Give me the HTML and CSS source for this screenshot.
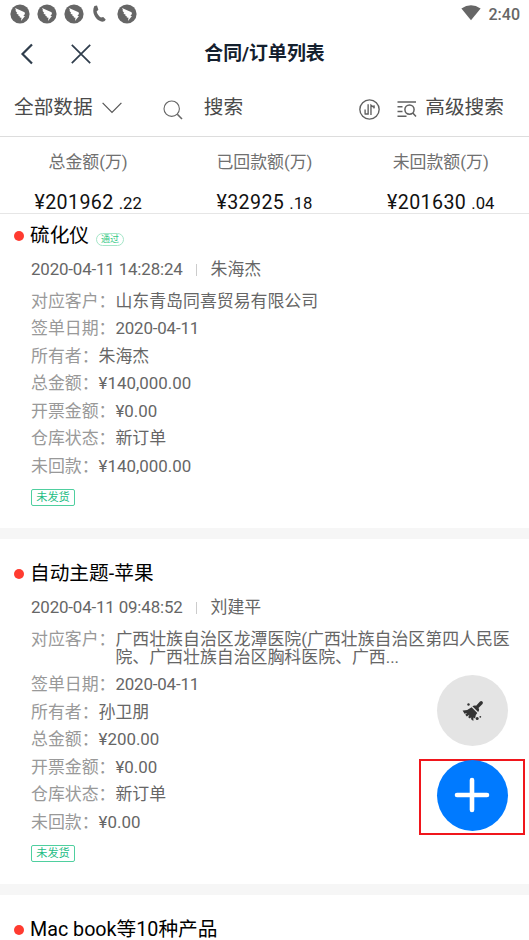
FILE: index.html
```html
<!DOCTYPE html>
<html lang="zh-CN">
<head>
<meta charset="utf-8">
<title>合同/订单列表</title>
<link rel="stylesheet" href="styles.css">
</head>
<body>
<svg width="0" height="0" class="defs">
  <symbol id="bird" viewBox="0 0 20 20"><circle cx="10" cy="10" r="9.6" fill="#666"/><path d="M5 4 14 8c1 .5 1.200 1.100.7 2.200L13.400 12h1.600l-4 5 .5-3.200-1.800-.3.300-1-2-.8 1-.8L6.300 9.500l1-.4-2.100-2.500 1-.2Z" fill="#fff"/></symbol>
</svg>
<div class="screen">
  <header class="status">
    <div class="notices">
      <svg class="bird"><use href="#bird"/></svg>
      <svg class="bird"><use href="#bird"/></svg>
      <svg class="bird"><use href="#bird"/></svg>
      <svg class="phone" viewBox="0 0 13 17"><path d="M1.400 1 4 .5 5.400 4.700 3.600 6.500C4.400 9.200 5.800 11.200 8 12.600L10.200 11.900 12.700 14.500C11.500 17.200 8.400 17.200 6 15.600 1.300 12.500-1.400 6 1.400 1Z" fill="#666"/></svg>
      <svg class="bird"><use href="#bird"/></svg>
    </div>
    <div class="system">
      <svg width="20" height="16" viewBox="0 0 20 16"><path d="M.4 3.400Q10-2.800 19.600 3.400L10 15.300Z" fill="#666"/></svg>
      <span>2:40</span>
    </div>
  </header>
  <nav class="nav">
    <div class="nav-side">
      <svg width="14" height="22" viewBox="0 0 14 22"><path d="M12 1.500 2.500 11 12 20.500" fill="none" stroke="#2f3d4c" stroke-width="2.200"/></svg>
      <svg width="20" height="20" viewBox="0 0 20 20"><path d="m.8.8 18.400 18.400M19.200.8.8 19.200" fill="none" stroke="#2f3d4c" stroke-width="1.700"/></svg>
    </div>
    <h1>合同/订单列表</h1>
    <div class="nav-side"></div>
  </nav>
  <div class="filter">
    <span class="scope">全部数据</span>
    <svg class="chevron" viewBox="0 0 20 12"><path d="m.6.8 9.400 9.600L19.400.8" fill="none" stroke="#555" stroke-width="1.200"/></svg>
    <svg class="glass" viewBox="0 0 20 20"><circle cx="8.700" cy="8.700" r="7.700" fill="none" stroke="#666" stroke-width="1.100"/><path d="m14.300 14.300 4.700 4.700" stroke="#666" stroke-width="1.600"/></svg>
    <span class="search">搜索</span>
    <svg class="sort" viewBox="0 0 20 20"><g fill="none" stroke="#606060" stroke-width="1.300"><circle cx="10" cy="10" r="9.200"/><path d="M8.700 5v9.300H5.300M5.800 10v4M11.400 15.200V5.900L15 8.600M14.300 6v3"/></g></svg>
    <svg class="adv-icon" viewBox="0 0 20 18"><g fill="none" stroke="#606060" stroke-width="1.500"><path d="M.5 2h18.500M.5 6.800h5M.5 11.500h5M.5 16.300h9M15.800 13l3.200 3.600"/><circle cx="12.500" cy="9.600" r="4.600"/></g></svg>
    <span class="advanced">高级搜索</span>
  </div>
  <section class="stats">
    <div><label>总金额(万)</label><p>¥201962<small>.22</small></p></div>
    <div><label>已回款额(万)</label><p>¥32925<small>.18</small></p></div>
    <div><label>未回款额(万)</label><p>¥201630<small>.04</small></p></div>
  </section>
  <main>
    <article class="card first">
      <h2><i></i><span>硫化仪</span><em>通过</em></h2>
      <div class="meta"><time>2020-04-11 14:28:24</time><b></b><span>朱海杰</span></div>
      <dl>
        <div><dt>对应客户：</dt><dd>山东青岛同喜贸易有限公司</dd></div>
        <div><dt>签单日期：</dt><dd><time>2020-04-11</time></dd></div>
        <div><dt>所有者：</dt><dd>朱海杰</dd></div>
        <div><dt>总金额：</dt><dd>¥140,000.00</dd></div>
        <div><dt>开票金额：</dt><dd>¥0.00</dd></div>
        <div><dt>仓库状态：</dt><dd>新订单</dd></div>
        <div><dt>未回款：</dt><dd>¥140,000.00</dd></div>
      </dl>
      <span class="tag">未发货</span>
    </article>
    <article class="card">
      <h2><i></i><span>自动主题-苹果</span></h2>
      <div class="meta"><time>2020-04-11 09:48:52</time><b></b><span>刘建平</span></div>
      <dl>
        <div><dt>对应客户：</dt><dd>广西壮族自治区龙潭医院(广西壮族自治区第四人民医<br>院、广西壮族自治区胸科医院、广西...</dd></div>
        <div><dt>签单日期：</dt><dd><time>2020-04-11</time></dd></div>
        <div><dt>所有者：</dt><dd>孙卫朋</dd></div>
        <div><dt>总金额：</dt><dd>¥200.00</dd></div>
        <div><dt>开票金额：</dt><dd>¥0.00</dd></div>
        <div><dt>仓库状态：</dt><dd>新订单</dd></div>
        <div><dt>未回款：</dt><dd>¥0.00</dd></div>
      </dl>
      <span class="tag">未发货</span>
    </article>
    <article class="card">
      <h2><i></i><span>Mac book等10种产品</span></h2>
    </article>
  </main>
  <div class="fab clean">
    <svg width="22" height="22" viewBox="0 0 22 22"><g fill="#333"><path d="M18 1.600a1.700 1.700 0 0 1 2.500 2.300l-4 4.200c1 1.500.7 2.700-.4 3.900L10.400 6.200c1.400-1 2.700-1 3.700-.4Z"/><path d="m9.600 7.200 5.700 5.700-1.500 2-.7 3.500-1.600-1-.2 3.700-2.200-1.800.1-2-1.300 1.300-1.700-1.300 1.200-2.500-2.600 1.600-1.500-1.700 1.800-1.600-2.600.6L.6 10.500Q5.500 10.800 9.600 7.200Z"/><circle cx="6.500" cy="4.500" r="1.200"/><circle cx="15.200" cy="18.600" r="1.500"/><circle cx="18.300" cy="16.800" r=".9"/></g></svg>
  </div>
  <div class="marker"></div>
  <div class="fab add">
    <svg width="36" height="36" viewBox="0 0 36 36"><path d="M18 3v30M3 18h30" stroke="#fff" stroke-width="4.600" stroke-linecap="round"/></svg>
  </div>
</div>
</body>
</html>
```
FILE: styles.css
```css
* { box-sizing: border-box; margin: 0; padding: 0; }
body { background: #fff; font-family: Roboto, "Noto Sans CJK SC", sans-serif; color: #666; }
.defs { position: absolute; }
.screen { position: relative; width: 529px; height: 940px; overflow: hidden; background: #fff; }
svg { display: block; flex: none; }

.status { height: 28px; display: flex; justify-content: space-between; padding: 0 9px 0 10px; }
.notices { display: flex; align-items: center; padding-bottom: 1px; }
.bird { width: 20px; height: 20px; margin-right: 7px; }
.phone { width: 13px; height: 17px; margin: 0 11px 0 2px; }
.system { display: flex; align-items: center; gap: 8px; font-size: 16px; font-weight: 500; }
.system svg { margin-bottom: 3px; }

.nav { height: 52px; display: flex; align-items: center; }
.nav-side { flex: 1; display: flex; align-items: center; gap: 37px; padding-left: 20px; }
.nav h1 { font-size: 18.900px; line-height: 28px; font-weight: 700; color: #14202e; white-space: nowrap; }

.filter { height: 57px; display: flex; align-items: center; padding: 0 14px; border-bottom: 1px solid #ddd; font-size: 19.700px; color: #4a4a4a; }
.filter span { line-height: 28px; }
.chevron { width: 20px; height: 12px; margin-left: 9px; }
.glass { width: 20px; height: 20px; margin: 3px 0 0 41px; }
.search { margin-left: 21px; }
.sort { width: 21px; height: 21px; margin: 2px 0 0 auto; }
.adv-icon { width: 20px; height: 18px; margin: 1px 8px 0 17px; }
.advanced { margin-right: 11px; }

.stats { height: 77px; display: grid; grid-template-columns: repeat(3, 176.300px); border-bottom: 1px solid #e6e6e6; text-align: center; }
.stats label { display: block; margin-top: 12px; font-size: 16.900px; line-height: 26px; color: #707070; }
.stats p { margin: 16px 0 0 0; font-size: 19.600px; line-height: 24px; letter-spacing: .4px; color: #111; white-space: nowrap; }
.stats small { margin-left: 5px; font-size: 16.700px; letter-spacing: 0; }

.card { padding: 20px 14px 21px 31px; border-bottom: 11px solid #f6f6f6; }
.card.first { padding-top: 7px; }
.card h2 { display: flex; align-items: center; height: 28px; margin: 0 0 4px -17px; font-size: 19.700px; font-weight: 400; line-height: 28px; color: #000; white-space: nowrap; }
.card h2 span { margin-top: 1px; }
.card h2 i { width: 10px; height: 10px; margin: 1px 6px 0 0; border-radius: 50%; background: #ff3b30; }
.card h2 em { height: 13px; width: 28px; margin: 8px 0 0 7px; border: 1px solid #a5e6c8; border-radius: 7px; font-size: 9px; line-height: 10px; font-style: normal; text-align: center; color: #35c985; }
.meta { height: 34px; display: flex; align-items: center; font-size: 16.900px; line-height: 24px; }
.meta span { margin-top: -2px; }
.meta time { margin-top: -2px; }
.card time { letter-spacing: -.16px; }
.meta b { width: 1px; height: 12px; margin: 0 14px 0 13px; background: #ccc; }
.card dl { font-size: 16.900px; line-height: 18px; }
.card dl div { display: flex; padding: 4.700px 0 4.800px; white-space: nowrap; }
.card dt { color: #999; }
.tag { display: block; width: 44px; height: 17px; margin: 10px 0 .7px; border: 1px solid #4fcf9f; border-radius: 2px; font-size: 11.200px; line-height: 15px; text-align: center; color: #1fbd85; }

.fab { position: absolute; left: 437px; width: 71px; height: 71px; border-radius: 50%; display: flex; align-items: center; justify-content: center; }
.clean { top: 675px; background: #e4e4e4; }
.add { top: 760px; background: #007aff; padding-bottom: 2px; padding-right: 1px; }
.marker { position: absolute; left: 419px; top: 759px; width: 106px; height: 76px; border: 2px solid #f0161c; }
```
